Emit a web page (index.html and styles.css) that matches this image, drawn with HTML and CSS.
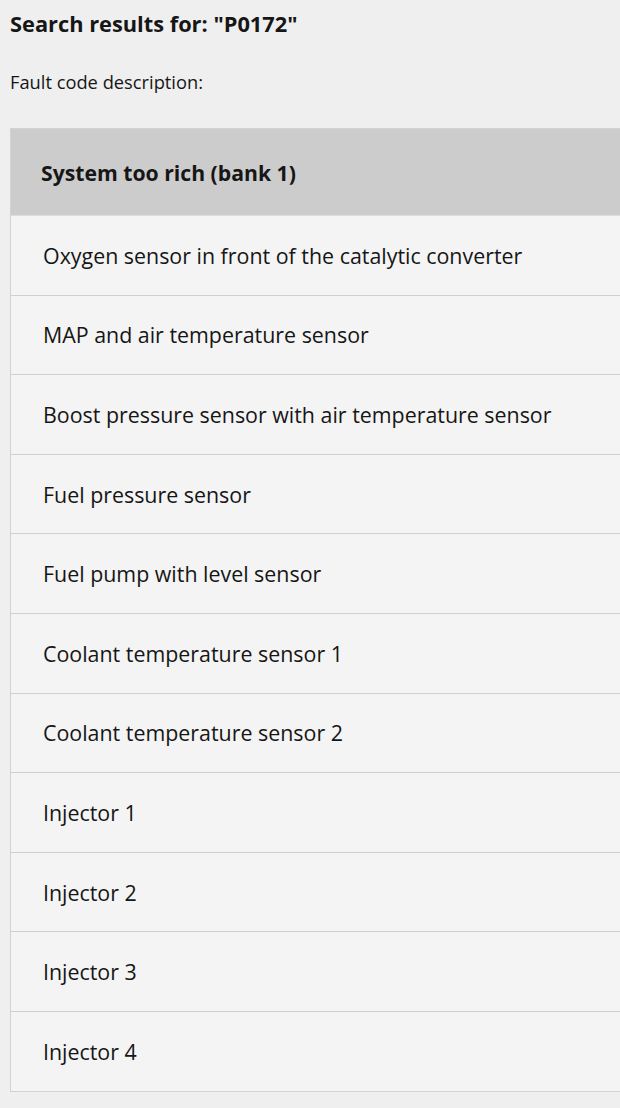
FILE: index.html
```html
<!DOCTYPE html>
<html lang="en">
<head>
<meta charset="utf-8">
<title>Search results</title>
<link rel="stylesheet" href="styles.css">
</head>
<body>
<div class="page">
  <h1 class="title">Search results for: "P0172"</h1>
  <p class="label">Fault code description:</p>
  <div class="list">
    <div class="list-head">System too rich (bank 1)</div>
    <div class="row">Oxygen sensor in front of the catalytic converter</div>
    <div class="row">MAP and air temperature sensor</div>
    <div class="row">Boost pressure sensor with air temperature sensor</div>
    <div class="row">Fuel pressure sensor</div>
    <div class="row">Fuel pump with level sensor</div>
    <div class="row">Coolant temperature sensor 1</div>
    <div class="row">Coolant temperature sensor 2</div>
    <div class="row">Injector 1</div>
    <div class="row">Injector 2</div>
    <div class="row">Injector 3</div>
    <div class="row">Injector 4</div>
  </div>
</div>
</body>
</html>
```
FILE: styles.css
```css
html, body {
  margin: 0;
  padding: 0;
  background: #efefef;
}
body {
  font-family: "Open Sans", "Noto Sans", sans-serif;
  color: #161616;
  overflow: hidden;
}
.page {
  padding: 10px 0 0 10px;
}
.title {
  margin: 0;
  font-size: 21.8px;
  font-weight: 700;
  line-height: 28px;
}
.label {
  margin: 32px 0 0 0;
  font-size: 18.3px;
  line-height: 24px;
}
.list {
  margin-top: 34px;
  margin-right: -20px;
  border: 1px solid #d2d2d2;
  border-right: none;
  display: flex;
  flex-direction: column;
}
.list-head {
  height: 86px;
  background: #cccccc;
  font-weight: 700;
  font-size: 21.2px;
  padding-left: 30px;
  display: flex;
  align-items: center;
  border-bottom: 1px solid #dddddd;
}
.row {
  height: 78.6px;
  background: #f4f4f4;
  font-size: 21.4px;
  padding-left: 32px;
  display: flex;
  align-items: center;
  border-bottom: 1px solid #d0d0d0;
}
.row:last-child {
  border-bottom: none;
}
```
